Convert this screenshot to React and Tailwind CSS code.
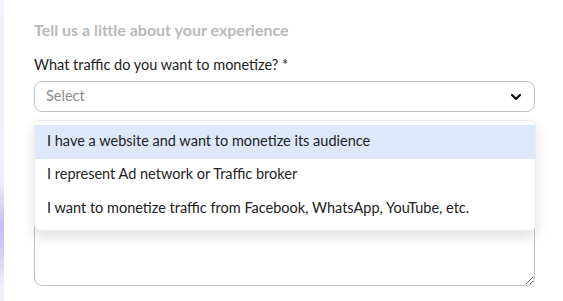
import { ChevronDown } from 'lucide-react';

// 선택 옵션 목록
const options = [
  'I have a website and want to monetize its audience',
  'I represent Ad network or Traffic broker',
  'I want to monetize traffic from Facebook, WhatsApp, YouTube, etc.',
];

export default function App() {
  return (
    <div className="flex h-[301px] w-[563px] overflow-hidden bg-white font-['Lato',sans-serif]">
      {/* 왼쪽 배경 띠 */}
      <div className="w-[4px] shrink-0 bg-[linear-gradient(180deg,#f3f2fb_0%,#f0eefb_60%,#c9bcf7_75%,#d9d0fa_85%,#f1f0fb_95%)]" />

      <div className="relative ml-[30px] w-[501px] pt-[20px]">
        <h3 className="text-[16px] font-bold leading-[20px] text-[#b9b9b9]">
          Tell us a little about your experience
        </h3>

        <label className="mt-[15px] block text-[14.5px] leading-[20px] text-[#1c1c1c]">
          What traffic do you want to monetize? *
        </label>

        {/* 셀렉트 박스 */}
        <div className="mt-[6px] flex h-[31px] items-center justify-between rounded-[8px] border border-[#c2c2c2] pl-[11px] pr-[10px]">
          <span className="-mt-[2px] text-[14.5px] text-[#8a8a8a]">Select</span>
          <ChevronDown size={16} strokeWidth={3.4} className="text-[#111]" />
        </div>

        {/* 텍스트 영역 (드롭다운 뒤) */}
        <textarea className="mt-[54px] block h-[120px] w-full rounded-[8px] border border-[#c2c2c2] outline-none" />

        {/* 드롭다운 메뉴 */}
        <div className="absolute left-0 top-[120px] w-[502px] rounded-[6px] border border-[#ececec] bg-white py-[4px] shadow-[0_6px_14px_rgba(0,0,0,0.13)]">
          {options.map((opt, i) => (
            <div
              key={opt}
              className={`flex h-[33.5px] items-center pl-[12px] text-[14.5px] text-[#222] ${i === 0 ? 'bg-[#dde9fb]' : ''}`}
            >
              <span className="-mt-[2px]">{opt}</span>
            </div>
          ))}
        </div>
      </div>
    </div>
  );
}
